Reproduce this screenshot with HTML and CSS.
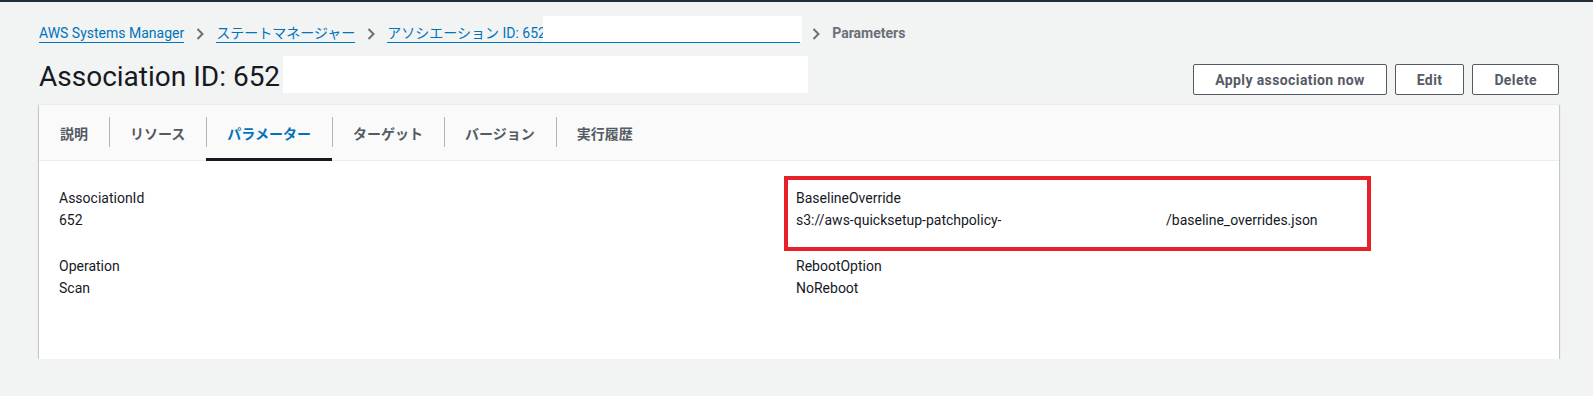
FILE: index.html
```html
<!DOCTYPE html>
<html lang="ja">
<head>
    <meta charset="UTF-8">
    <title>Association Parameters</title>
    <link rel="stylesheet" href="styles.css">
</head>
<body>
    <div class="topbar"></div>

    <main class="page">
        <!-- breadcrumbs -->
        <nav class="breadcrumbs">
            <a class="crumb" href="#">AWS Systems Manager</a>
            <svg class="chevron" width="8" height="12" viewBox="0 0 8 12"><path d="M1.5 1l5 5-5 5" fill="none" stroke="#687078" stroke-width="2"/></svg>
            <a class="crumb" href="#">ステートマネージャー</a>
            <svg class="chevron" width="8" height="12" viewBox="0 0 8 12"><path d="M1.5 1l5 5-5 5" fill="none" stroke="#687078" stroke-width="2"/></svg>
            <a class="crumb crumb-long" href="#">アソシエーション ID: 652<span class="redact crumb-redact"></span></a>
            <svg class="chevron" width="8" height="12" viewBox="0 0 8 12"><path d="M1.5 1l5 5-5 5" fill="none" stroke="#687078" stroke-width="2"/></svg>
            <span class="crumb-current">Parameters</span>
        </nav>

        <div class="title-row">
            <h1 class="title">Association ID: 652<span class="redact title-redact"></span></h1>
            <div class="actions">
                <button class="btn">Apply association now</button>
                <button class="btn">Edit</button>
                <button class="btn">Delete</button>
            </div>
        </div>

        <section class="card">
            <div class="tabs">
                <div class="tab">説明</div>
                <div class="tab">リソース</div>
                <div class="tab active">パラメーター</div>
                <div class="tab">ターゲット</div>
                <div class="tab">バージョン</div>
                <div class="tab">実行履歴</div>
            </div>

            <div class="params">
                <div class="param">
                    <div class="param-key">AssociationId</div>
                    <div class="param-value">652</div>
                </div>
                <div class="param param-marked">
                    <div class="param-key">BaselineOverride</div>
                    <div class="param-value"><span class="s3-bucket">s3://aws-quicksetup-patchpolicy-</span>/baseline_overrides.json</div>
                    <span class="mark-box"></span>
                </div>
                <div class="param">
                    <div class="param-key">Operation</div>
                    <div class="param-value">Scan</div>
                </div>
                <div class="param">
                    <div class="param-key">RebootOption</div>
                    <div class="param-value">NoReboot</div>
                </div>
            </div>
        </section>
    </main>
</body>
</html>
```

FILE: styles.css
```css
body {
    margin: 0;
    background: #f2f3f3;
    font-family: Roboto, "Noto Sans CJK JP", sans-serif;
    font-size: 14px;
    color: #16191f;
}
.topbar {
    height: 2px;
    background: #232f3e;
}
.page {
    padding: 0 34px 0 39px;
}

/* breadcrumbs */
.breadcrumbs {
    display: flex;
    align-items: center;
    margin-top: 22px;
    line-height: 18px;
}
.crumb {
    display: inline-block;
    color: #0073bb;
    text-decoration: none;
    border-bottom: 1px solid #0073bb;
}
.crumb-long {
    position: relative;
    width: 413px;
    white-space: nowrap;
}
.chevron {
    margin: 0 12px;
    flex-shrink: 0;
}
.crumb-current {
    color: #687078;
    font-weight: bold;
    padding-bottom: 1px;
}
.redact {
    position: absolute;
    background: #fff;
}
.crumb-redact {
    right: -2px;
    top: -8px;
    width: 259px;
    height: 26px;
}

/* title + buttons */
.title-row {
    display: flex;
    justify-content: space-between;
    align-items: flex-end;
    margin-top: 16px;
}
.title {
    position: relative;
    margin: 0;
    font-size: 28px;
    font-weight: normal;
    line-height: 36px;
    white-space: nowrap;
}
.title-redact {
    left: calc(100% + 3px);
    top: -3px;
    width: 525px;
    height: 37px;
}
.actions {
    display: flex;
    gap: 8px;
}
.btn {
    height: 31px;
    padding: 0 21px;
    border: 1px solid #545b64;
    border-radius: 2px;
    background: #fff;
    color: #545b64;
    font-family: inherit;
    font-size: 14px;
    font-weight: bold;
    letter-spacing: 0.4px;
}

/* card */
.card {
    margin-top: 9px;
    background: #fff;
    border-top: 1px solid #eaeded;
    box-shadow: 0 1px 1px 0 rgba(0, 28, 36, 0.3), 1px 1px 1px 0 rgba(0, 28, 36, 0.15), -1px 1px 1px 0 rgba(0, 28, 36, 0.15);
}
.tabs {
    display: flex;
    height: 55px;
    background: #fafafa;
    border-bottom: 1px solid #eaeded;
}
.tab {
    position: relative;
    display: flex;
    align-items: center;
    padding: 0 21px;
    font-weight: bold;
    color: #545b64;
}
.tab + .tab::before {
    content: "";
    position: absolute;
    left: 0;
    top: 12px;
    width: 1px;
    height: 30px;
    background: #aab7b8;
}
.tab.active {
    color: #0073bb;
}
.tab.active::after {
    content: "";
    position: absolute;
    left: 0;
    right: 0;
    bottom: -1px;
    height: 3px;
    background: #16191f;
}

.params {
    display: grid;
    grid-template-columns: 1fr 1fr;
    column-gap: 20px;
    row-gap: 26px;
    padding: 27px 46px 61px 20px;
}
.param {
    position: relative;
    line-height: 20px;
}
.param-value {
    margin-top: 2px;
}
.s3-bucket {
    display: inline-block;
    width: 370px;
}
.mark-box {
    position: absolute;
    left: -12px;
    top: -12px;
    width: 587px;
    height: 75px;
    box-sizing: border-box;
    border: 4px solid #e8202a;
}
```
